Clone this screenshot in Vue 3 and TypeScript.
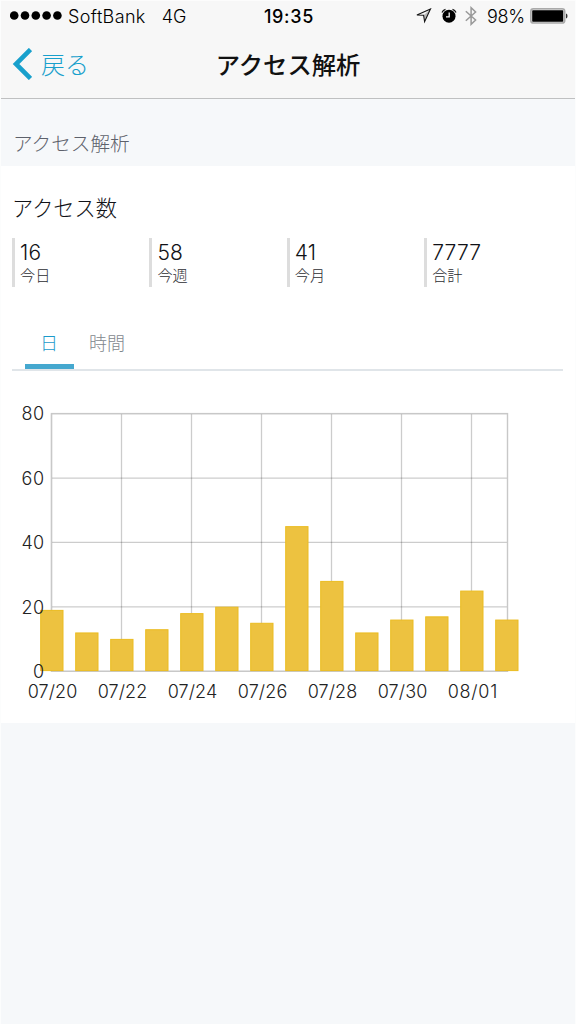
<script setup lang="ts">
interface Stat { value: string; label: string }
interface Bar { x: number; value: number }

const stats: Stat[] = [
  { value: '16', label: '今日' },
  { value: '58', label: '今週' },
  { value: '41', label: '今月' },
  { value: '7777', label: '合計' },
]

const left = 51.5
const right = 507.5
const top = 37.6
const bottom = 295.3
const step = 35
const values = [19, 12, 10, 13, 18, 20, 15, 45, 28, 12, 16, 17, 25, 16]
const dates = ['07/20', '07/22', '07/24', '07/26', '07/28', '07/30', '08/01']
const ticks = [0, 20, 40, 60, 80]

const yOf = (v: number): number => bottom - (v * (bottom - top)) / 80
const bars: Bar[] = values.map((value, i) => ({ x: left + i * step - 11.3, value }))
</script>

<template>
  <div class="screen">
    <header class="top">
      <div class="status">
        <div class="side">
          <svg class="dots" width="54" height="12" viewBox="0 0 54 12">
            <circle v-for="n in 5" :key="n" :cx="4.2 + (n - 1) * 10.8" cy="5.5" r="4.3" />
          </svg>
          <span class="carrier">SoftBank</span>
          <span class="network">4G</span>
        </div>
        <span class="clock">19:35</span>
        <div class="side end">
          <svg class="loc" width="16" height="16" viewBox="0 0 16 16">
            <path d="M14.5 .9 .9 7 7.6 7.2 8.6 13.6Z" fill="none" stroke="#111" stroke-width="1.1" stroke-linejoin="miter" />
            <path d="M14.5 .9 7.6 7.2 8.6 13.6Z" fill="#333" fill-opacity=".3" />
          </svg>
          <svg class="alarm" width="16" height="16" viewBox="0 0 16 16">
            <circle cx="8" cy="8.2" r="6.5" fill="#000" />
            <path d="M1 4.5Q2 2 4.5 1.3M15 4.5Q14 2 11.5 1.3" fill="none" stroke="#111" stroke-width="1.2" />
            <path d="M8.2 4.5V8.8H5" fill="none" stroke="#f7f7f7" stroke-width="1.3" />
          </svg>
          <svg class="bt" width="12" height="20" viewBox="0 0 12 20">
            <path d="M.8 5.2 10.6 14 6.1 18.3V1.7L10.6 6 .8 14.8" fill="none" stroke="#999" stroke-width="1.5" />
          </svg>
          <span class="percent">98%</span>
          <svg class="battery" width="38" height="16" viewBox="0 0 38 16">
            <rect x=".8" y=".8" width="33.9" height="14.2" rx="2.6" fill="#ddd" stroke="#aaa" stroke-width="1.6" />
            <rect x="2.2" y="2.2" width="31" height="11.5" rx=".8" fill="#000" />
            <path d="M36 5.4Q37.5 5.7 37.5 7.9T36 10.4Z" fill="#333" />
          </svg>
        </div>
      </div>
      <nav class="nav">
        <a class="back">
          <svg width="20" height="32" viewBox="0 0 20 32">
            <path d="M18.5 1.5 4 16 18.5 30.5" fill="none" stroke="#18a0cc" stroke-width="4.6" />
          </svg>
          <span>戻る</span>
        </a>
        <h1>アクセス解析</h1>
      </nav>
    </header>
    <div class="section">アクセス解析</div>
    <main>
      <h2>アクセス数</h2>
      <div class="stats">
        <div v-for="s in stats" :key="s.label" class="stat">
          <div class="num">{{ s.value }}</div>
          <div class="cap">{{ s.label }}</div>
        </div>
      </div>
      <div class="tabs">
        <div class="tab active">日</div>
        <div class="tab">時間</div>
      </div>
      <svg class="chart" width="576" height="346" viewBox="0 0 576 346">
        <g class="grid">
          <line v-for="(d, i) in dates" :key="d" :x1="left + i * 2 * step" :x2="left + i * 2 * step" :y1="top" :y2="bottom" />
          <line v-for="t in ticks" :key="t" :x1="left" :x2="right" :y1="yOf(t)" :y2="yOf(t)" />
        </g>
        <rect class="frame" :x="left" :y="top" :width="right - left" :height="bottom - top" />
        <g class="bars">
          <rect v-for="b in bars" :key="b.x" :x="b.x + 0.5" :y="yOf(b.value) + 0.3" width="22.3" :height="bottom - yOf(b.value) - 1" />
        </g>
        <g class="axis">
          <text v-for="t in ticks" :key="t" x="44" :y="yOf(t) + 6.7" text-anchor="end" :textLength="t ? 22.5 : 11.5">{{ t }}</text>
          <text v-for="(d, i) in dates" :key="d" :x="left + i * 2 * step + 1" y="322.3" text-anchor="middle" textLength="49.5">{{ d }}</text>
        </g>
      </svg>
    </main>
  </div>
</template>

<style>
body { margin: 0; background: #fff; }
</style>

<style scoped>
.screen {
  box-sizing: border-box;
  width: 576px;
  height: 1024px;
  overflow: hidden;
  background: #f6f8fa;
  border-left: 1px solid #fcfdfd;
  border-right: 1px solid #fcfdfd;
  border-top: 1px solid #fcfcfc;
  font-family: Inter, "Noto Sans CJK JP", sans-serif;
}
.top { height: 97px; background: #f7f7f7; border-bottom: 1px solid #bfc0c1; }
.status {
  display: grid;
  grid-template-columns: 1fr auto 1fr;
  align-items: center;
  height: 30px;
  padding: 0 7px 0 9px;
  color: #000;
  font-size: 18px;
  font-weight: 350;
}
.side { display: flex; align-items: center; }
.end { justify-content: flex-end; }
.carrier { margin-left: 4px; letter-spacing: 0.35px; }
.network { margin-left: 16px; letter-spacing: 0.1px; }
.clock { font-weight: 500; letter-spacing: 0.7px; }
.alarm { margin-left: 9px; }
.bt { margin-left: 8px; }
.percent { margin: 0 5px 0 10px; letter-spacing: -0.2px; }
.nav {
  display: grid;
  grid-template-columns: 1fr auto 1fr;
  align-items: center;
  height: 66px;
  padding: 0 11px;
}
.back { display: flex; align-items: center; gap: 9px; color: #18a0cc; font-size: 24px; font-weight: 300; }
.back span { margin-top: -2px; }
h1 { margin: -2px 0 0; font-size: 24.3px; font-weight: 500; color: #111; }
.section {
  height: 67px;
  box-sizing: border-box;
  padding: 31px 12px 0;
  line-height: 28px;
  font-size: 19.6px;
  font-weight: 300;
  color: #5d616b;
}
main { height: 557px; background: #fff; }
h2 { margin: 0; padding: 28px 12px 0 11px; height: 43px; line-height: 28px; font-size: 21.2px; font-weight: 300; color: #111217; }
.stats { display: grid; grid-template-columns: repeat(4, 137.4px); padding: 1px 0 0 11px; }
.stat { height: 49px; border-left: 3px solid #ddd; padding-left: 5px; }
.num { padding-top: 2px; height: 25px; line-height: 25px; font-size: 21px; font-weight: 350; letter-spacing: 0.2px; color: #111217; }
.cap { line-height: 21px; font-size: 15.2px; font-weight: 300; color: #2c2d32; }
.tabs { display: flex; margin: 28px 12px 0 11px; padding: 0 13px; height: 54px; border-bottom: 2px solid #e0e5e9; }
.tab { box-sizing: border-box; height: 54px; padding: 16px 16px 0 15px; line-height: 26px; font-size: 18px; font-weight: 300; color: #7f888e; }
.active { width: 49px; color: #1c9aca; border-bottom: 5px solid #45a8cf; }
.chart { display: block; margin: 5px 0 0 -1px; }
.grid line { stroke: #000; stroke-opacity: 0.2; stroke-width: 1.3; }
.frame { fill: none; stroke: #c8c8c8; stroke-width: 1.4; }
.bars rect { fill: #edc240; stroke: #ebbc20; stroke-width: 1; }
.axis text { font-size: 18px; font-weight: 300; fill: #222; }
</style>
